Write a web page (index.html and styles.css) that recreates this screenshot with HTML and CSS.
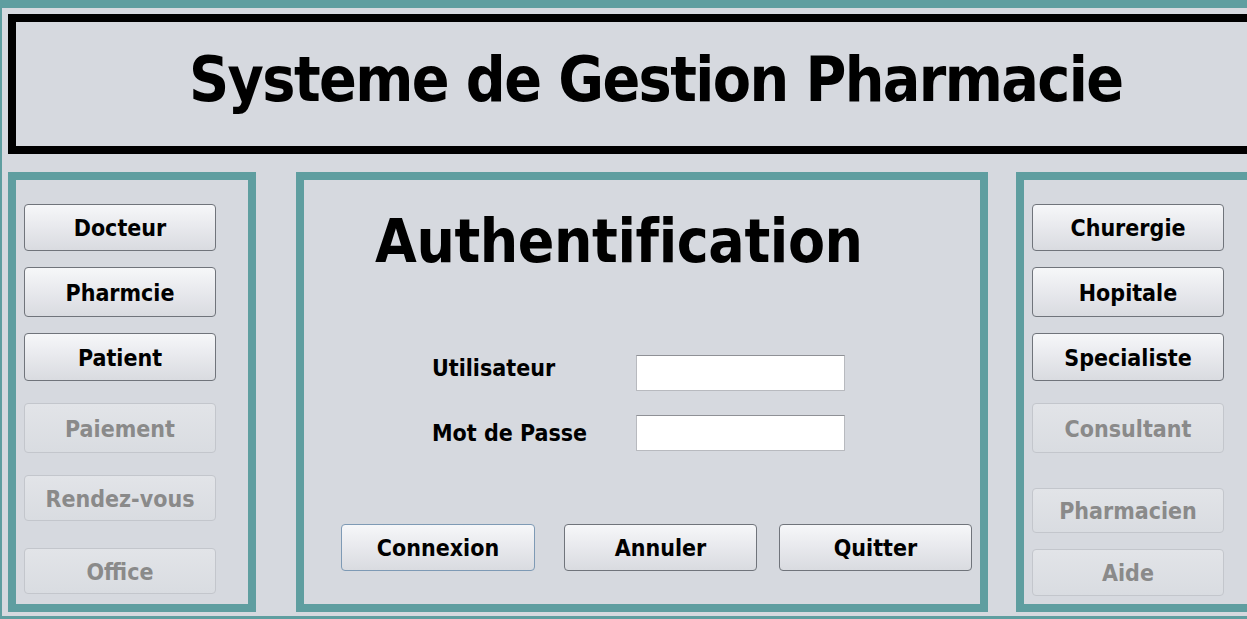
FILE: index.html
```html
<!DOCTYPE html>
<html lang="fr">
<head>
<meta charset="utf-8">
<title>Systeme de Gestion Pharmacie</title>
<link rel="stylesheet" href="styles.css">
</head>
<body>
<div class="window">
  <header class="banner"><h1 class="banner-title">Systeme de Gestion Pharmacie</h1></header>
  <div class="panels">
    <nav class="side side-left">
      <button class="btn h47 mt24">Docteur</button>
      <button class="btn h50 mt16">Pharmcie</button>
      <button class="btn h48 mt16">Patient</button>
      <button class="btn h50 mt22" disabled>Paiement</button>
      <button class="btn h46 mt22" disabled>Rendez-vous</button>
      <button class="btn h46 mt27" disabled>Office</button>
    </nav>
    <main class="auth">
      <h2 class="auth-title">Authentification</h2>
      <div class="form">
        <label class="form-label form-label-first" for="user">Utilisateur</label>
        <input class="form-input" id="user" type="text">
        <label class="form-label" for="pass">Mot de Passe</label>
        <input class="form-input" id="pass" type="password">
      </div>
      <div class="actions">
        <button class="btn act act-focus">Connexion</button>
        <button class="btn act">Annuler</button>
        <button class="btn act">Quitter</button>
      </div>
    </main>
    <nav class="side side-right">
      <button class="btn h47 mt24">Churergie</button>
      <button class="btn h50 mt16">Hopitale</button>
      <button class="btn h48 mt16">Specialiste</button>
      <button class="btn h50 mt22" disabled>Consultant</button>
      <button class="btn h45 mt35" disabled>Pharmacien</button>
      <button class="btn h47 mt16" disabled>Aide</button>
    </nav>
  </div>
</div>
</body>
</html>
```
FILE: styles.css
```css
html, body {
  margin: 0;
  height: 100%;
}
body {
  background: #5f9ea0;
  overflow: hidden;
  font-family: "DejaVu Sans Condensed", "DejaVu Sans", sans-serif;
  font-stretch: condensed;
  font-weight: bold;
  color: #000;
}
.window {
  margin: 8px 0 0 2px;
  height: 608px;
  background: #d6d9df;
  overflow: hidden;
  padding: 6px 0 0 6px;
  box-sizing: border-box;
}
.banner {
  width: 1300px;
  height: 140px;
  border: 8px solid #000;
  box-sizing: border-box;
  padding: 27px 0 0 173px;
}
.banner-title {
  margin: 0;
  font-size: 62px;
  line-height: 62px;
  letter-spacing: -1.6px;
  font-weight: bold;
  white-space: nowrap;
}
.panels {
  display: flex;
  margin-top: 18px;
}
.side, .auth {
  flex-shrink: 0;
  height: 440px;
  border: 8px solid #5f9ea0;
  box-sizing: border-box;
}
.side {
  width: 248px;
  display: flex;
  flex-direction: column;
  padding-left: 8px;
}
.side-left { margin-right: 40px; }
.auth {
  width: 692px;
  margin-right: 28px;
  display: flex;
  flex-direction: column;
}
.btn {
  width: 192px;
  height: 48px;
  padding: 2px 0 0;
  border: 1px solid #70747b;
  border-radius: 4px;
  background: linear-gradient(#f6f7f9 0%, #e9eaee 45%, #d9dbe0 100%);
  font-family: inherit;
  font-stretch: condensed;
  font-weight: bold;
  font-size: 23px;
  line-height: 1;
  color: #000;
  display: flex;
  align-items: center;
  justify-content: center;
  box-sizing: border-box;
}
.btn:disabled {
  border-color: #c3c6cc;
  background: linear-gradient(#e2e4e8, #d9dce1);
  color: #8a8a8a;
}
.h45 { height: 45px; }
.h46 { height: 46px; }
.h47 { height: 47px; }
.h48 { height: 48px; }
.h50 { height: 50px; }
.mt16 { margin-top: 16px; }
.mt22 { margin-top: 22px; }
.mt24 { margin-top: 24px; }
.mt27 { margin-top: 27px; }
.mt35 { margin-top: 35px; }

.auth-title {
  margin: 31px 0 0 71px;
  font-size: 60px;
  line-height: 60px;
  letter-spacing: -0.4px;
  font-weight: bold;
}
.form {
  display: grid;
  grid-template-columns: 204px 209px;
  row-gap: 24px;
  margin: 84px 0 0 128px;
  align-items: center;
}
.form-label {
  font-size: 23px;
  line-height: 1;
}
.form-label-first {
  margin-bottom: 9px;
}
.form-input {
  width: 209px;
  height: 36px;
  margin: 0;
  box-sizing: border-box;
  border: 1px solid #b8babf;
  border-top-color: #8f9196;
  background: #fff;
}
.actions {
  display: flex;
  margin: 73px 0 0 37px;
}
.act {
  width: 193px;
  height: 47px;
  margin-right: 29px;
}
.act:nth-child(2) { margin-right: 22px; }
.act:last-child { margin-right: 0; }
.act-focus {
  width: 194px;
  border-color: #7e9ab5;
}
```
